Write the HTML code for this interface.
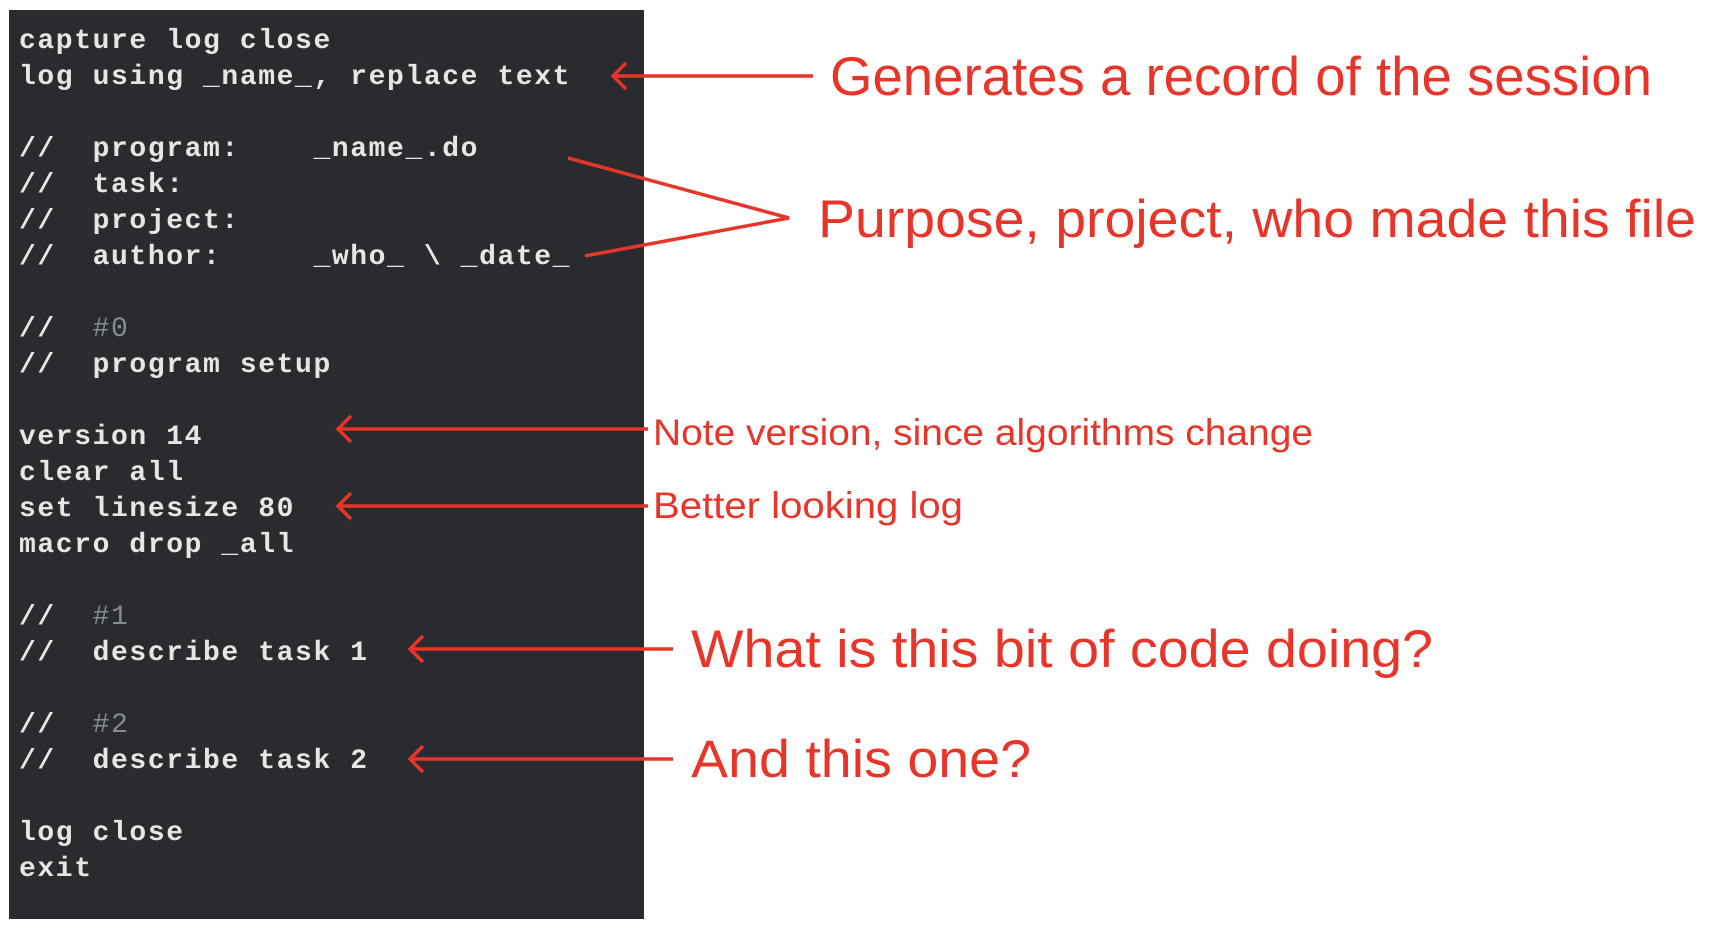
<!DOCTYPE html>
<html><head><meta charset="utf-8"><style>
html,body{margin:0;padding:0;background:#fff;width:1714px;height:940px;overflow:hidden}
svg{display:block}
.c{font-family:"Liberation Mono",monospace;font-weight:bold;font-size:28px;fill:#e6e6e6;letter-spacing:1.6px}
.g{fill:#858b93;font-weight:normal}
.r{font-family:"Liberation Sans",sans-serif;fill:#e8352a}
</style></head><body>
<svg width="1714" height="940" viewBox="0 0 1714 940">
<rect x="9" y="10" width="635" height="909" fill="#2a2b2f"/>
<g class="c">
<text x="19" y="48">capture log close</text>
<text x="19" y="84">log using _name_, replace text</text>
<text x="19" y="156">//&#160;&#160;program:&#160;&#160;&#160;&#160;_name_.do</text>
<text x="19" y="192">//&#160;&#160;task:</text>
<text x="19" y="228">//&#160;&#160;project:</text>
<text x="19" y="264">//&#160;&#160;author:&#160;&#160;&#160;&#160;&#160;_who_ \ _date_</text>
<text x="19" y="336">//&#160;&#160;<tspan class="g">#0</tspan></text>
<text x="19" y="372">//&#160;&#160;program setup</text>
<text x="19" y="444">version 14</text>
<text x="19" y="480">clear all</text>
<text x="19" y="516">set linesize 80</text>
<text x="19" y="552">macro drop _all</text>
<text x="19" y="624">//&#160;&#160;<tspan class="g">#1</tspan></text>
<text x="19" y="660">//&#160;&#160;describe task 1</text>
<text x="19" y="732">//&#160;&#160;<tspan class="g">#2</tspan></text>
<text x="19" y="768">//&#160;&#160;describe task 2</text>
<text x="19" y="840">log close</text>
<text x="19" y="876">exit</text>
</g>
<g stroke="#e8352a" stroke-width="3.5" fill="none" stroke-linecap="butt">
<path d="M813 76H614M626 63L613 76L626 89"/>
<path d="M568 158L789 218L585 256"/>
<path d="M648 429H339M351 416L338 429L351 442"/>
<path d="M648 506H339M351 493L338 506L351 519"/>
<path d="M673 649H411M423 636L410 649L423 662"/>
<path d="M673 759H411M423 746L410 759L423 772"/>
</g>
<text class="r" x="830" y="95" font-size="55" textLength="822" lengthAdjust="spacingAndGlyphs">Generates a record of the session</text>
<text class="r" x="818" y="237" font-size="53" textLength="878" lengthAdjust="spacingAndGlyphs">Purpose, project, who made this file</text>
<text class="r" x="653" y="445" font-size="37" textLength="660" lengthAdjust="spacingAndGlyphs">Note version, since algorithms change</text>
<text class="r" x="653" y="518" font-size="37" textLength="310" lengthAdjust="spacingAndGlyphs">Better looking log</text>
<text class="r" x="691" y="667" font-size="53" textLength="742" lengthAdjust="spacingAndGlyphs">What is this bit of code doing?</text>
<text class="r" x="691" y="777" font-size="53" textLength="340" lengthAdjust="spacingAndGlyphs">And this one?</text>
</svg>
</body></html>
